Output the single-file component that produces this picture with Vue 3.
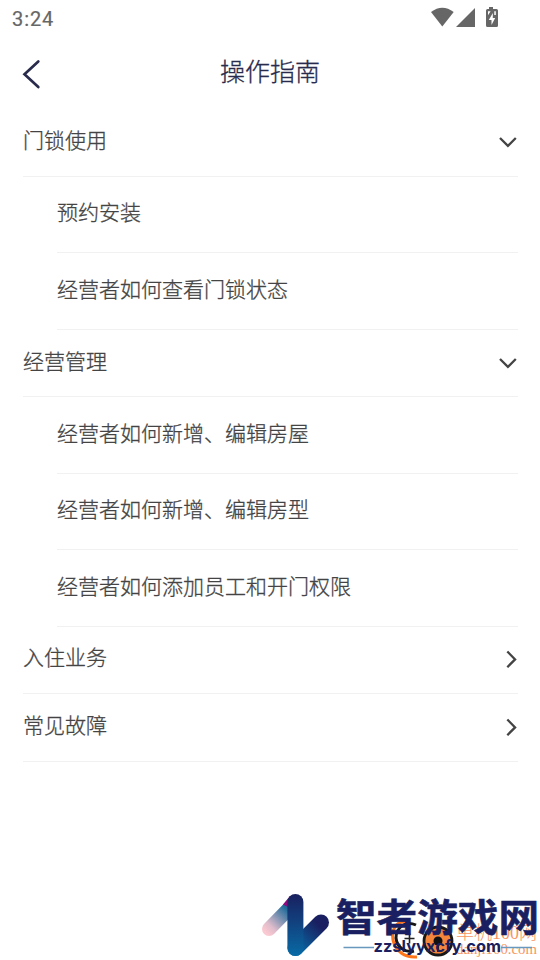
<script setup>
const rows = [
  { text: '门锁使用', kind: 'group', open: true },
  { text: '预约安装', kind: 'item' },
  { text: '经营者如何查看门锁状态', kind: 'item' },
  { text: '经营管理', kind: 'group', open: true },
  { text: '经营者如何新增、编辑房屋', kind: 'item' },
  { text: '经营者如何新增、编辑房型', kind: 'item' },
  { text: '经营者如何添加员工和开门权限', kind: 'item' },
  { text: '入住业务', kind: 'group', open: false },
  { text: '常见故障', kind: 'group', open: false },
]
</script>

<template>
  <main class="screen">
    <div class="status">
      <span class="time">3:24</span>
      <svg class="status-icons" width="70" height="24" viewBox="0 0 70 24" fill="#666">
        <path d="M1 12.3Q12.300 3.800 23.700 12.300L12.300 26.700Z" transform="translate(0 -.2)" />
        <path d="M45 8V27H26Z" />
        <path d="M59 7h4v2h3.500q1.500 0 1.500 1.500v15q0 1.500-1.500 1.500h-9q-1.500 0-1.500-1.500v-15q0-1.500 1.500-1.500h1.500Z" />
        <path d="M62.800 13l-4 7h2.700v5l3.700-7h-2.400ZM58 11.300h2.600l-2.600 3.900ZM64.300 11.300h1.500v3.800h-1.500Z" fill="#fff" />
      </svg>
    </div>
    <header class="bar">
      <svg class="back" width="20" height="30" viewBox="0 0 20 30"><path d="M17.300 2.500L3.500 15.300L17.300 28" /></svg>
      <h1>操作指南</h1>
    </header>
    <section class="list">
      <div v-for="row in rows" :key="row.text" :class="['row', row.kind]">
        <span class="label">{{ row.text }}</span>
        <svg v-if="row.kind === 'group' && row.open" class="chevron" width="18" height="18" viewBox="0 0 18 18"><path d="M0 5L7.900 12.900L15.800 5" /></svg>
        <svg v-else-if="row.kind === 'group'" class="chevron" width="18" height="18" viewBox="0 0 18 18"><path d="M7.300 1.500L15.100 9.400L7.300 17.200" /></svg>
      </div>
    </section>
    <svg class="watermark" width="290" height="80" viewBox="250 880 290 80">
      <defs>
        <linearGradient id="stem" x1="0" y1="894" x2="0" y2="956" gradientUnits="userSpaceOnUse">
          <stop offset="0" stop-color="#19205f" /><stop offset="1" stop-color="#086aa5" />
        </linearGradient>
        <linearGradient id="tail" x1="265" y1="932" x2="294" y2="902" gradientUnits="userSpaceOnUse">
          <stop offset="0" stop-color="#fbc9d1" /><stop offset=".2" stop-color="#dfbccb" /><stop offset=".75" stop-color="#226c9b" /><stop offset="1" stop-color="#17568c" />
        </linearGradient>
        <linearGradient id="arm" x1="295" y1="948" x2="318" y2="924" gradientUnits="userSpaceOnUse">
          <stop offset="0" stop-color="#086aa5" /><stop offset="1" stop-color="#191f60" />
        </linearGradient>
      </defs>
      <g fill="none" stroke-width="14" stroke-linecap="round">
        <path d="M269 929L292 905.500" stroke="url(#tail)" />
        <path d="M283 904.500L290 896V908Z" fill="#8b087d" stroke="none" />
        <path d="M295.500 948L321 922.500" stroke="url(#arm)" stroke-width="16" />
        <path d="M295.400 902V948" stroke="url(#stem)" stroke-width="16" />
      </g>
      <g fill="none">
        <path d="M407 923C397 919 391 930 393 940C395 951 405 958 417 957" stroke="#ff7417" stroke-width="3" />
        <path d="M416 925C405 920 396 928 396 938C397 948 406 953 414 951" stroke="#161616" stroke-width="3" />
        <path d="M404.500 938.500H414.500M409.500 933.500V943.500" stroke="#222" stroke-width="1.600" />
        <circle cx="438" cy="941" r="14" fill="#f4853b" stroke="#181818" stroke-width="2.800" />
        <circle cx="438" cy="941" r="4.500" fill="#111" />
        <path d="M438 945v7" stroke="#222" stroke-width="2" />
      </g>
      <text class="orange-cn" x="456" y="939" textLength="81" lengthAdjust="spacingAndGlyphs">单机100网</text>
      <text class="orange-url" x="456" y="954" textLength="81" lengthAdjust="spacingAndGlyphs">danji100.com</text>
      <path d="M343.500 947.500H374M501 947.500H532" stroke="#6898bd" stroke-width="1.300" />
      <text class="brand" x="336" y="930.500" textLength="203" lengthAdjust="spacingAndGlyphs">智者游戏网</text>
      <text class="url" x="373.500" y="952" textLength="127.500" lengthAdjust="spacingAndGlyphs">zzslyyxcfy.com</text>
    </svg>
  </main>
</template>

<style>
body { background: #fff; }
</style>

<style scoped>
.screen { position: relative; box-sizing: border-box; width: 540px; height: 960px; overflow: hidden; background: #fff; color: #444; font-family: "Noto Sans CJK SC", sans-serif; }
.status { display: flex; justify-content: space-between; height: 38px; padding: 0 42px 0 12px; }
.time { font: 400 20px/38px Roboto, sans-serif; letter-spacing: .9px; color: #666; -webkit-text-stroke: .2px #666; }
.status-icons { margin-right: -2px; overflow: visible; }
.bar { display: grid; grid-template-columns: 40px 1fr 40px; height: 71.5px; padding: 0 10px; }
.back { margin: 21px 0 0 11px; fill: none; stroke: #292b4c; stroke-width: 2.700; stroke-linecap: round; }
h1 { margin: 13px 0 0; text-align: center; font-size: 25px; line-height: 38px; font-weight: 300; color: #292b4c; -webkit-text-stroke: .3px #292b4c; }
.list { padding: 0 22px 0 23px; }
.row { box-sizing: border-box; display: flex; align-items: center; justify-content: space-between; border-bottom: 1px solid #f1f1f1; }
.group { height: 67.4px; }
.item { height: 76.5px; margin-left: 34px; }
.label { font-size: 21px; font-weight: 300; line-height: 30px; margin-top: -7px; -webkit-text-stroke: .3px #444; }
.chevron { fill: none; stroke: #444; stroke-width: 2.300; margin-top: -1px; overflow: visible; }
.watermark { position: absolute; left: 250px; top: 880px; }
.orange-cn { font: 300 18px "Liberation Serif", "Noto Sans CJK SC", serif; fill: #f9955f; }
.orange-url { font: 15.5px "Liberation Serif", serif; fill: #f9955f; }
.brand { font: 700 38px "Noto Sans CJK SC", sans-serif; fill: #191f60; stroke: #191f60; stroke-width: .6px; }
.url { font: 700 16.500px Inter, sans-serif; fill: #191f60; }
</style>
